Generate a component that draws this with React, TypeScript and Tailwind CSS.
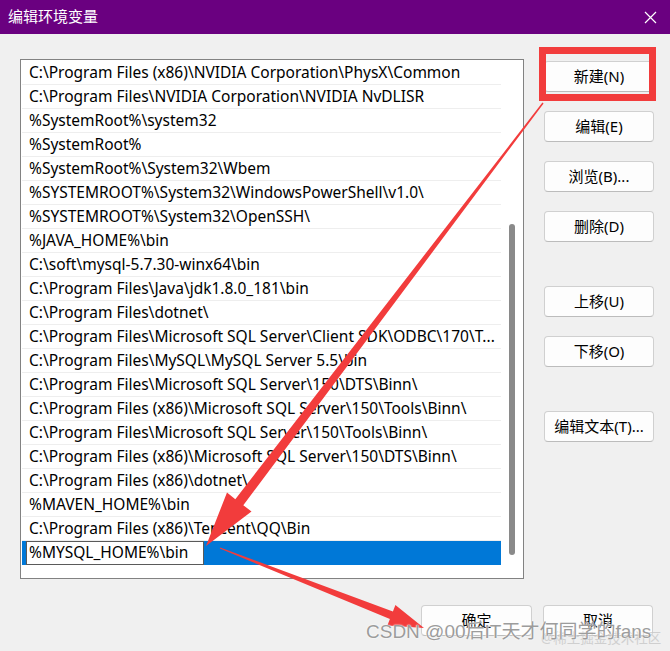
import React from 'react'

// Entrées de la variable Path, dans l'ordre de l'écran
const PATHS = [
  'C:\\Program Files (x86)\\NVIDIA Corporation\\PhysX\\Common',
  'C:\\Program Files\\NVIDIA Corporation\\NVIDIA NvDLISR',
  '%SystemRoot%\\system32',
  '%SystemRoot%',
  '%SystemRoot%\\System32\\Wbem',
  '%SYSTEMROOT%\\System32\\WindowsPowerShell\\v1.0\\',
  '%SYSTEMROOT%\\System32\\OpenSSH\\',
  '%JAVA_HOME%\\bin',
  'C:\\soft\\mysql-5.7.30-winx64\\bin',
  'C:\\Program Files\\Java\\jdk1.8.0_181\\bin',
  'C:\\Program Files\\dotnet\\',
  'C:\\Program Files\\Microsoft SQL Server\\Client SDK\\ODBC\\170\\T...',
  'C:\\Program Files\\MySQL\\MySQL Server 5.5\\bin',
  'C:\\Program Files\\Microsoft SQL Server\\150\\DTS\\Binn\\',
  'C:\\Program Files (x86)\\Microsoft SQL Server\\150\\Tools\\Binn\\',
  'C:\\Program Files\\Microsoft SQL Server\\150\\Tools\\Binn\\',
  'C:\\Program Files (x86)\\Microsoft SQL Server\\150\\DTS\\Binn\\',
  'C:\\Program Files (x86)\\dotnet\\',
  '%MAVEN_HOME%\\bin',
  'C:\\Program Files (x86)\\Tencent\\QQ\\Bin',
]

function Btn({ label, className = '' }: { label: string; className?: string }) {
  return (
    <button
      className={`h-[31px] w-[110px] rounded-[4px] border border-[#d0d0d0] border-b-[#bcbcbc] bg-[#fdfdfd] text-[15px] text-black flex items-center justify-center ${className}`}
    >
      {label}
    </button>
  )
}

export default function App() {
  return (
    <div className="relative w-[670px] h-[651px] overflow-hidden bg-[#f0f0f0] font-['Noto_Sans','Noto_Sans_CJK_SC',sans-serif]">

      {/* Barre de titre */}
      <div className="h-[34px] bg-[#6a0080] flex items-center justify-between pl-[8px] pr-[13px]">
        <span className="text-white text-[15px] pb-[2px]">编辑环境变量</span>
        <svg width="13" height="13" viewBox="0 0 13 13" stroke="white" strokeWidth="1.2">
          <path d="M1 1l11 11M12 1L1 12" />
        </svg>
      </div>

      <div className="flex pl-[20px] pt-[25px]">
        {/* Liste */}
        <div className="w-[504px] h-[520px] border border-[#828282] bg-white flex">
          <div className="w-[480px] pt-[1px]">
            {PATHS.map(p => (
              <div
                key={p}
                className="h-[24px] flex items-center pl-[7px] ml-[1px] border-b border-[#eeeeee] text-[15.5px] text-black whitespace-nowrap overflow-hidden"
              >
                {p}
              </div>
            ))}
            {/* Ligne en cours d'édition */}
            <div className="h-[24px] ml-[1px] bg-[#0078d7] flex">
              <div className="ml-[4px] w-[178px] h-[24px] border border-[#5a5a5a] bg-white flex items-center pl-[2px] text-[15.5px] text-black whitespace-nowrap overflow-hidden">
                %MYSQL_HOME%\bin
              </div>
            </div>
          </div>
          {/* Barre de défilement */}
          <div className="w-[22px] pt-[164px] flex justify-center">
            <div className="w-[6px] h-[331px] rounded-full bg-[#8a8a8a]" />
          </div>
        </div>

        {/* Boutons de droite */}
        <div className="ml-[20px] pt-[2px] flex flex-col">
          <Btn label="新建(N)" />
          <Btn label="编辑(E)" className="mt-[19px]" />
          <Btn label="浏览(B)..." className="mt-[19px]" />
          <Btn label="删除(D)" className="mt-[19px]" />
          <Btn label="上移(U)" className="mt-[44px]" />
          <Btn label="下移(O)" className="mt-[19px]" />
          <Btn label="编辑文本(T)..." className="mt-[44px]" />
        </div>
      </div>

      {/* Boutons du bas */}
      <div className="flex justify-end gap-[11px] pr-[17px] mt-[26px]">
        <Btn label="确定" className="w-[111px] border-[#0067c0] border-b-[#0067c0]" />
        <Btn label="取消" />
      </div>

      {/* Annotations rouges */}
      <svg className="absolute inset-0 pointer-events-none" width="670" height="651" viewBox="0 0 670 651">
        <rect x="542.5" y="50.5" width="110" height="47" fill="none" stroke="#f23c3c" strokeWidth="7" />
        <polygon
          fill="#f23c3c"
          points="542.4,102.6 235.3,499.2 227,492.5 206,546 251.5,511.5 243.3,505.2 543.6,103.4"
        />
        <polygon
          fill="#f23c3c"
          points="220.2,547.4 392.9,611.5 395.4,605 424,628 387.4,625.4 389.9,618.9 219.8,548.6"
        />
      </svg>

      {/* Filigrane */}
      <span className="absolute left-[541px] top-[628px] text-[13.5px] text-[#c8c8c8] opacity-80 whitespace-nowrap">
        @稀土掘金技术社区
      </span>
      <span className="absolute left-[366px] top-[618px] text-[19px] text-[#9c9c9c] whitespace-nowrap font-['Liberation_Sans','Noto_Sans_CJK_SC',sans-serif] [text-shadow:0_0_2px_#ffffff,0_0_1px_#ffffff]">
        CSDN @00后IT天才何同学的fans
      </span>
    </div>
  )
}
